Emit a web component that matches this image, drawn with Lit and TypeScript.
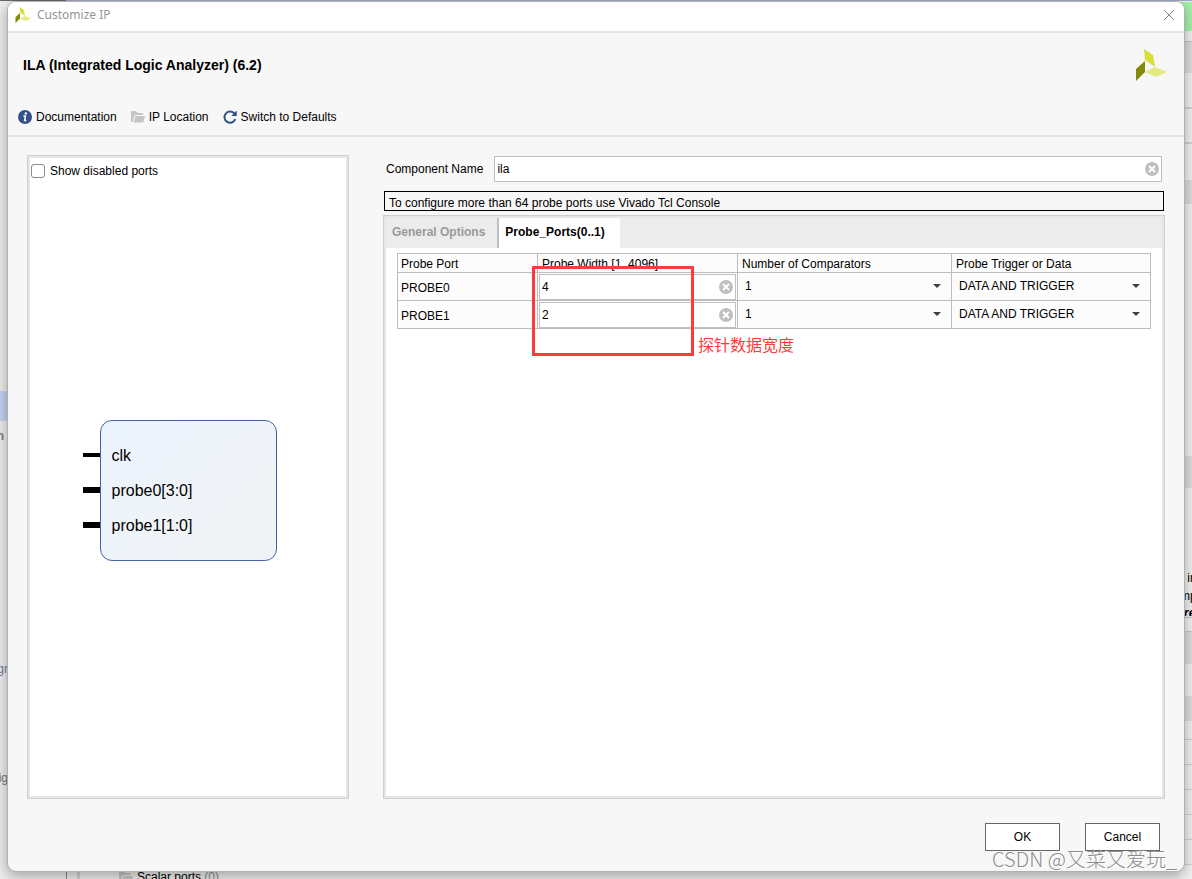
import { LitElement, html, css, svg } from "lit";
import { customElement, state } from "lit/decorators.js";

const logoShapes = svg`
  <path d="M9 0 L18 6 L20 18 L10 11 Z" fill="#d7e03a"/>
  <path d="M1 20 L10 12 L10 23 L1 32 Z" fill="#858a0a"/>
  <path d="M10 23 L20 18 L32 23 L21 28 Z" fill="#e3ea80"/>`;

const folderIcon = html`<svg class="icon" viewBox="0 0 14 14" width="14" height="14" aria-hidden="true">
  <path d="M0 2 Q0 1 1 1 H5 L6.500 3 H11 Q12 3 12 4 V5 H4 L2 10 V12 H1 Q0 12 0 11 Z" fill="#c6c6c6"/>
  <path d="M4.600 6 H14 L12.300 12.500 H2.500 Z" fill="#c6c6c6"/>
</svg>`;

const clearIcon = html`<svg viewBox="0 0 14 14" width="14" height="14" aria-hidden="true">
  <circle cx="7" cy="7" r="7" fill="#bfbfbf"/>
  <path d="M4 4 L10 10 M10 4 L4 10" stroke="#fff" stroke-width="2"/>
</svg>`;

interface Probe {
  name: string;
  width: string;
}

@customElement("app-root")
export class AppRoot extends LitElement {
  @state() private componentName = "ila";
  @state() private probes: Probe[] = [
    { name: "PROBE0", width: "4" },
    { name: "PROBE1", width: "2" },
  ];

  static styles = css`
    :host {
      display: block;
      position: relative;
      overflow: hidden;
      font: 12px/16px "Liberation Sans", Arial, sans-serif;
      color: #000;
    }
    *, *::before, *::after { box-sizing: border-box; }
    button, input, select { font: inherit; color: inherit; margin: 0; }
    svg { display: block; flex: none; }

    .backdrop {
      position: absolute;
      inset: 0;
      background: linear-gradient(90deg, #6a6769 66px, #a0aac4 66px) top / 100% 1px no-repeat, #ededed;
    }
    .rail {
      position: absolute;
      top: 2px;
      right: 0;
      bottom: 0;
      width: 12px;
      background: linear-gradient(
        #a4f4aa 29px, #f2f2f2 29px 39px, #c8c8c8 39px 40px, #dedede 40px 71px,
        #f2f2f2 71px 105px, #d2d2d2 105px 107px, #f2f2f2 107px 140px, #d2d2d2 140px 142px,
        #f2f2f2 142px 178px, #dedede 178px 202px, #f2f2f2 202px 454px, #dedede 454px 486px,
        #f2f2f2 486px 615px, #c4c4c4 615px 616px, #f2f2f2 616px 629px, #c8c8c8 629px 630px,
        #dedede 630px 662px, #f2f2f2 662px 694px, #dedede 694px 719px, #f2f2f2 719px 737px,
        #d2d2d2 737px 738px, #f2f2f2 738px 762px, #d2d2d2 762px 763px, #f2f2f2 763px 787px,
        #d2d2d2 787px 788px, #f2f2f2 788px 812px, #d2d2d2 812px 813px, #f2f2f2 813px 837px,
        #d2d2d2 837px 838px, #f2f2f2 838px 862px, #d2d2d2 862px 863px, #f2f2f2 863px
      );
    }
    .stray { position: absolute; white-space: nowrap; }
    .sel { left: 0; top: 391px; width: 8px; height: 30px; background: #c3d3f3; }
    .s1 { right: 1188px; top: 428px; font-weight: bold; color: #7c7c88; }
    .s2 { right: 1184px; top: 661px; color: #6d7f96; }
    .s3 { right: 1184px; top: 770px; color: #77736c; }
    .s4 { left: 1178px; top: 570px; }
    .s5 { left: 1180px; top: 588px; }
    .s6 { left: 1184px; top: 605px; height: 11px; overflow: hidden; font-style: italic; font-weight: bold; }
    .tree {
      left: 66px;
      top: 868px;
      height: 18px;
      display: flex;
      align-items: center;
      gap: 4px;
      padding-left: 40px;
      border-left: 1px solid #8c8c8c;
    }
    .tree::before { content: ""; width: 3px; height: 18px; background: #d0d0d0; margin: 0 35px 0 -30px; }
    .tree .count { color: #888; }

    .stage { position: relative; display: flex; min-height: 100vh; padding: 1px 7px 7px; }
    .dialog {
      flex: 1;
      display: flex;
      flex-direction: column;
      min-width: 0;
      background: #f7f7f7;
      border: 1px solid #b0b0b0;
      border-radius: 9px;
      box-shadow: 0 4px 14px rgba(0, 0, 0, 0.32);
      overflow: hidden;
    }
    .titlebar {
      display: flex;
      align-items: center;
      gap: 6px;
      height: 31px;
      padding: 0 9px 3px 7px;
      background: #fff;
      border-bottom: 2px solid #e6e6e6;
      font-family: "Noto Sans", sans-serif;
      color: #969696;
    }
    .titlebar span { flex: 1; }
    .plain { display: flex; align-items: center; gap: 4px; padding: 0; border: 0; background: none; }

    .head { display: flex; justify-content: space-between; padding: 16px 17px 0 15px; height: 62px; }
    h1 { margin: 0; padding-top: 7px; font-size: 14px; line-height: 18px; }
    .tools {
      display: flex;
      gap: 14px;
      height: 42px;
      padding: 14px 10px 0;
      align-items: flex-start;
      border-bottom: 2px solid #e6e6e6;
    }
    .body { flex: 1; display: flex; gap: 34px; padding: 18px 19px 0 19px; }
    .frame { border: 1px solid #cfcfcf; outline: 2px solid #e6e6e6; outline-offset: -3px; background: #fff; padding: 2px; }
    .preview { flex: none; width: 322px; display: flex; flex-direction: column; }
    .check { display: flex; align-items: center; gap: 5px; height: 26px; padding-left: 1px; }
    .check input {
      appearance: none;
      width: 14px;
      height: 14px;
      border: 1px solid #8a8a8a;
      border-radius: 3px;
      background: #fff;
    }
    .canvas { flex: 1; display: flex; align-items: center; justify-content: center; }
    .block {
      width: 177px;
      padding: 17px 11px;
      border: 1px solid #4464a4;
      border-radius: 12px;
      background: linear-gradient(135deg, #eaf3ff, #eff4f9 50%, #f1f4f6);
      font-size: 16px;
      line-height: 35px;
    }
    .pin { position: relative; }
    .pin::before {
      content: "";
      position: absolute;
      left: -29px;
      top: 14px;
      width: 17px;
      height: 6px;
      background: #000;
    }
    .pin.single::before { top: 15px; height: 4px; }

    .config { flex: 1; min-width: 0; display: flex; flex-direction: column; }
    .name { display: flex; align-items: center; gap: 11px; padding: 0 3px 0 3px; height: 28px; }
    .field {
      flex: 1;
      min-width: 0;
      display: flex;
      align-items: center;
      height: 26px;
      padding: 0 2px;
      border: 1px solid #c0c0c0;
      background: #fff;
    }
    .field input { flex: 1; min-width: 0; border: 0; padding: 0; background: none; outline: none; }
    .notice {
      margin: 8px 1px 4px;
      height: 20px;
      padding: 3px 4px 0;
      border: 1px solid #000;
      white-space: nowrap;
    }
    .tabbed { flex: 1; }
    .tabs { display: flex; height: 30px; background: #ececec; font-weight: bold; }
    .tabs button { border: 0; background: none; font-weight: bold; padding: 0 12px 3px 6px; }
    .tabs .on { background: #fff; border-left: 2px solid #c0c0c0; padding: 0 15px 3px 6px; }
    .tabs .off { color: #999; }

    table { width: calc(100% - 22px); margin: 5px 11px; border-collapse: collapse; table-layout: fixed; }
    th, td { border: 1px solid #bcbcbc; background: #fcfcfc; padding: 0; text-align: left; font-weight: normal; }
    th { height: 19px; padding: 2px 4px 0; line-height: 16px; }
    th:first-child { padding-left: 3px; }
    td { height: 28px; }
    td.port { padding: 2px 3px 0; }
    .c1 { width: 140px; }
    .c2 { width: 200px; }
    .c3 { width: 214px; }
    .mark { position: relative; }
    .hl { position: absolute; z-index: 1; left: -6px; top: 12px; width: 162px; height: 90px; border: 3px solid #fd3b3b; pointer-events: none; }
    .note {
      position: absolute;
      z-index: 1;
      left: 160px;
      top: 78px;
      font: 16px/24px "Noto Sans CJK SC", sans-serif;
      color: #fd3b3b;
      white-space: nowrap;
    }
    td .field { margin: 0 1px; }
    .drop { position: relative; display: flex; align-items: center; height: 26px; padding: 0 10px 2px 0; }
    .drop select { appearance: none; flex: 1; border: 0; background: none; padding: 0 7px; outline: none; height: 24px; }
    .drop svg { pointer-events: none; }

    .actions { display: flex; justify-content: flex-end; gap: 25px; padding: 24px 24px 20px; }
    .actions button { width: 75px; height: 28px; border: 1px solid #666; background: #fff; padding: 0; }
    .watermark {
      position: absolute;
      right: 15px;
      bottom: 5px;
      font: 300 20px/30px "Noto Sans CJK SC", sans-serif;
      color: #8c8c8c;
      text-shadow: 1px 1px 0 #fff;
      pointer-events: none;
    }
  `;

  private setWidth(index: number, width: string) {
    this.probes = this.probes.map((p, i) => (i === index ? { ...p, width } : p));
  }

  private dropdown(label: string, value: string) {
    return html`<div class="drop">
      <select aria-label=${label}><option>${value}</option></select>
      <svg width="8" height="4" viewBox="0 0 8 4" aria-hidden="true"><path d="M0 0 H8 L4 4 Z" fill="#404040"/></svg>
    </div>`;
  }

  private row(p: Probe, i: number) {
    return html`<tr>
      <td class="port">${p.name}</td>
      <td>
        <div class="field">
          <input aria-label="${p.name} width" .value=${p.width}
            @input=${(e: Event) => this.setWidth(i, (e.target as HTMLInputElement).value)} />
          <button class="plain" aria-label="Clear" @click=${() => this.setWidth(i, "")}>${clearIcon}</button>
        </div>
      </td>
      <td>${this.dropdown(`${p.name} comparators`, "1")}</td>
      <td>${this.dropdown(`${p.name} trigger or data`, "DATA AND TRIGGER")}</td>
    </tr>`;
  }

  render() {
    return html`
      <div class="backdrop" aria-hidden="true">
        <div class="rail"></div>
        <div class="stray sel"></div>
        <div class="stray s1">n</div>
        <div class="stray s2">gr</div>
        <div class="stray s3">ig</div>
        <div class="stray s4">y in</div>
        <div class="stray s5">mp</div>
        <div class="stray s6">re</div>
        <div class="stray tree">${folderIcon}<span>Scalar ports <span class="count">(0)</span></span></div>
      </div>
      <div class="stage">
        <section class="dialog" role="dialog" aria-label="Customize IP">
          <header class="titlebar">
            <svg width="16" height="16" viewBox="0 0 32 32" aria-hidden="true">${logoShapes}</svg>
            <span>Customize IP</span>
            <button class="plain" aria-label="Close">
              <svg width="12" height="12" viewBox="0 0 12 12"><path d="M1 1 L11 11 M11 1 L1 11" stroke="#8a8a8a" fill="none"/></svg>
            </button>
          </header>
          <div class="head">
            <h1>ILA (Integrated Logic Analyzer) (6.2)</h1>
            <svg width="32" height="32" viewBox="0 0 32 32" aria-hidden="true">${logoShapes}</svg>
          </div>
          <nav class="tools">
            <button class="plain">
              <svg width="14" height="14" viewBox="0 0 14 14" aria-hidden="true">
                <circle cx="7" cy="7" r="7" fill="#34508a"/>
                <circle cx="7.800" cy="3.400" r="1.200" fill="#fff"/>
                <path d="M5.400 6 H7.500 L6.600 10.500 H8.300" fill="none" stroke="#fff" stroke-width="1.500"/>
              </svg>Documentation
            </button>
            <button class="plain">${folderIcon}IP Location</button>
            <button class="plain">
              <svg width="14" height="14" viewBox="0 0 14 14" aria-hidden="true">
                <path d="M11.600 3.800 A5.600 5.600 0 1 0 12.300 9.200" fill="none" stroke="#34508a" stroke-width="2"/>
                <path d="M13.800 0.500 V6 H8.300 Z" fill="#34508a"/>
              </svg>Switch to Defaults
            </button>
          </nav>
          <div class="body">
            <div class="frame preview">
              <label class="check"><input type="checkbox" />Show disabled ports</label>
              <div class="canvas">
                <div class="block">
                  <div class="pin single">clk</div>
                  <div class="pin">probe0[3:0]</div>
                  <div class="pin">probe1[1:0]</div>
                </div>
              </div>
            </div>
            <div class="config">
              <div class="name">
                <label for="cname">Component Name</label>
                <div class="field">
                  <input id="cname" .value=${this.componentName}
                    @input=${(e: Event) => (this.componentName = (e.target as HTMLInputElement).value)} />
                  <button class="plain" aria-label="Clear" @click=${() => (this.componentName = "")}>${clearIcon}</button>
                </div>
              </div>
              <div class="notice">To configure more than 64 probe ports use Vivado Tcl Console</div>
              <div class="frame tabbed">
                <div class="tabs" role="tablist">
                  <button class="off" role="tab">General Options</button>
                  <button class="on" role="tab" aria-selected="true">Probe_Ports(0..1)</button>
                </div>
                <table>
                  <colgroup><col class="c1" /><col class="c2" /><col class="c3" /><col /></colgroup>
                  <thead>
                    <tr>
                      <th>Probe Port</th>
                      <th class="mark">Probe Width [1..4096]<div class="hl"></div><div class="note">探针数据宽度</div></th>
                      <th>Number of Comparators</th>
                      <th>Probe Trigger or Data</th>
                    </tr>
                  </thead>
                  <tbody>${this.probes.map((p, i) => this.row(p, i))}</tbody>
                </table>
              </div>
            </div>
          </div>
          <footer class="actions">
            <button>OK</button>
            <button>Cancel</button>
          </footer>
        </section>
        <div class="watermark">CSDN @又菜又爱玩_</div>
      </div>
    `;
  }
}
